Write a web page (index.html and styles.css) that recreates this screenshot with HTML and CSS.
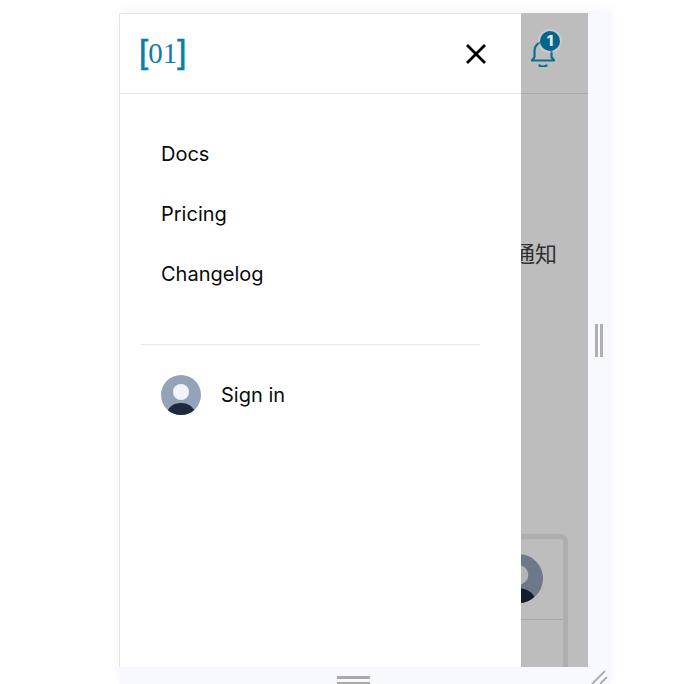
FILE: index.html
```html
<!DOCTYPE html>
<html lang="en">
  <head>
    <meta charset="UTF-8" />
    <meta name="viewport" content="width=device-width, initial-scale=1.0" />
    <title>[01]</title>
    <link rel="stylesheet" href="styles.css">
  </head>
  <body>
    <div class="frame">
      <div class="viewport">
        <!-- Page behind the drawer -->
        <header class="topbar">
          <div class="bell">
            <svg width="28" height="28" viewBox="0 0 28 28" fill="none" stroke="#0a6f8f" stroke-width="2.2" stroke-linecap="round" stroke-linejoin="round">
              <path d="M3 21.5h22l-2.5-3.5v-6.5a8.5 8.5 0 0 0-17 0V18z" />
              <path d="M10.5 26.5c2 1.4 5 1.4 7 0" />
            </svg>
            <span class="badge">1</span>
          </div>
        </header>
        <p class="notice">通知</p>
        <div class="card">
          <div class="card-top">
            <svg class="card-avatar" width="49" height="49" viewBox="0 0 40 40">
              <use href="#avatar" />
            </svg>
          </div>
        </div>

        <div class="overlay"></div>

        <!-- Mobile nav drawer -->
        <aside class="drawer">
          <div class="drawer-head">
            <a class="logo"><b>[</b>01<b>]</b></a>
            <svg width="24" height="24" viewBox="0 0 24 24" fill="none" stroke="#000" stroke-width="2.8" stroke-linecap="square">
              <path d="M4 4l16 16M20 4L4 20" />
            </svg>
          </div>
          <nav class="drawer-nav">
            <a>Docs</a>
            <a>Pricing</a>
            <a>Changelog</a>
          </nav>
          <div class="drawer-user">
            <svg width="40" height="40" viewBox="0 0 40 40">
              <defs>
                <g id="avatar">
                  <clipPath id="avatarClip"><circle cx="20" cy="20" r="20" /></clipPath>
                  <circle cx="20" cy="20" r="20" fill="#94a3b8" />
                  <circle cx="20" cy="17" r="8" fill="#f1f5f9" />
                  <ellipse cx="20" cy="39" rx="14" ry="11" fill="#1e293b" clip-path="url(#avatarClip)" />
                </g>
              </defs>
              <use href="#avatar" />
            </svg>
            <span>Sign in</span>
          </div>
        </aside>
      </div>

      <div class="handle-side"><i></i><i></i></div>
      <div class="handle-bottom"><i></i><i></i></div>
      <svg class="corner" width="20" height="16" viewBox="0 0 20 16" stroke="#b0b0b0" stroke-width="2">
        <path d="M4 16L17 3M12 16l7-7" />
      </svg>
    </div>
  </body>
</html>
```

FILE: styles.css
```css
/* Basic styling */
body {
  font-family: Inter, "Noto Sans CJK SC", sans-serif;
  background-color: #fff;
  color: #0a0a0a;
  margin: 0;
  padding: 13px 0 0 119px;
}

.frame {
  position: relative;
  display: grid;
  grid-template-columns: 469px 23px;
  grid-template-rows: 654px 17px;
  width: 492px;
  height: 671px;
  background-color: #f8f9fe;
  box-shadow: 0 -4px 12px rgba(0, 0, 0, 0.04);
}

.viewport {
  position: relative;
  overflow: hidden;
  background-color: #fff;
}

.topbar {
  display: flex;
  justify-content: flex-end;
  align-items: center;
  box-sizing: border-box;
  height: 81px;
  padding-right: 31px;
  border-bottom: 1px solid #e5e5e5;
}

.bell {
  position: relative;
  z-index: 2;
  width: 28px;
  height: 28px;
}

.badge {
  position: absolute;
  top: -8px;
  right: -3px;
  width: 20px;
  height: 20px;
  border-radius: 50%;
  background-color: #04678a;
  color: #e8e8e8;
  font-size: 15px;
  font-weight: 800;
  line-height: 20px;
  text-align: center;
  box-shadow: 0 0 0 2px rgba(255, 255, 255, 0.2);
}

.notice {
  margin: 145px 0 0;
  padding-left: 394px;
  font-size: 22px;
  line-height: 30px;
  color: #444;
}

.card {
  box-sizing: border-box;
  width: 449px;
  height: 200px;
  margin-top: 265px;
  border: 5px solid #ebebef;
  border-radius: 8px;
}

.card-top {
  display: flex;
  justify-content: flex-end;
  box-sizing: border-box;
  height: 81px;
  padding: 15px 20px 0 0;
  border-bottom: 1px solid #e5e5e5;
}

.overlay {
  position: absolute;
  z-index: 1;
  inset: 0;
  background-color: rgba(0, 0, 0, 0.26);
}

.drawer {
  position: absolute;
  z-index: 3;
  top: 0;
  left: 0;
  bottom: 0;
  box-sizing: border-box;
  width: 402px;
  background-color: #fff;
  border-left: 1px solid #e5e5e5;
  border-top: 1px solid #e5e5e5;
}

.drawer-head {
  display: flex;
  justify-content: space-between;
  align-items: center;
  box-sizing: border-box;
  height: 80px;
  padding: 0 33px 0 19px;
  border-bottom: 1px solid #e5e5e5;
}

.logo {
  padding-bottom: 4px;
  font-family: "Liberation Serif", serif;
  font-size: 29px;
  line-height: 1;
  color: #0b7ea3;
}

.logo b {
  font-family: "Liberation Sans", sans-serif;
  font-size: 33px;
  font-weight: 400;
  -webkit-text-stroke: 0.6px #0b7ea3;
}

.drawer-nav {
  display: flex;
  flex-direction: column;
  margin: 30px 41px 0 21px;
  padding: 0 0 40px 20px;
  border-bottom: 1px solid #e9e9e9;
}

.drawer-nav a {
  height: 60px;
  font-size: 20px;
  line-height: 60px;
}

.drawer-user {
  display: flex;
  align-items: center;
  gap: 20px;
  margin: 30px 0 0 41px;
  font-size: 20px;
}

.handle-side {
  display: flex;
  justify-content: center;
  align-items: center;
  gap: 2px;
  padding-right: 2px;
}

.handle-side i {
  width: 3px;
  height: 33px;
  background-color: #b0b0b0;
}

.handle-bottom {
  display: flex;
  flex-direction: column;
  align-items: center;
  gap: 3px;
  padding-top: 9px;
  overflow: hidden;
}

.handle-bottom i {
  flex: none;
  width: 33px;
  height: 3px;
  background-color: #a9a9a9;
}

.corner {
  position: absolute;
  right: 3px;
  bottom: 0;
}
```
